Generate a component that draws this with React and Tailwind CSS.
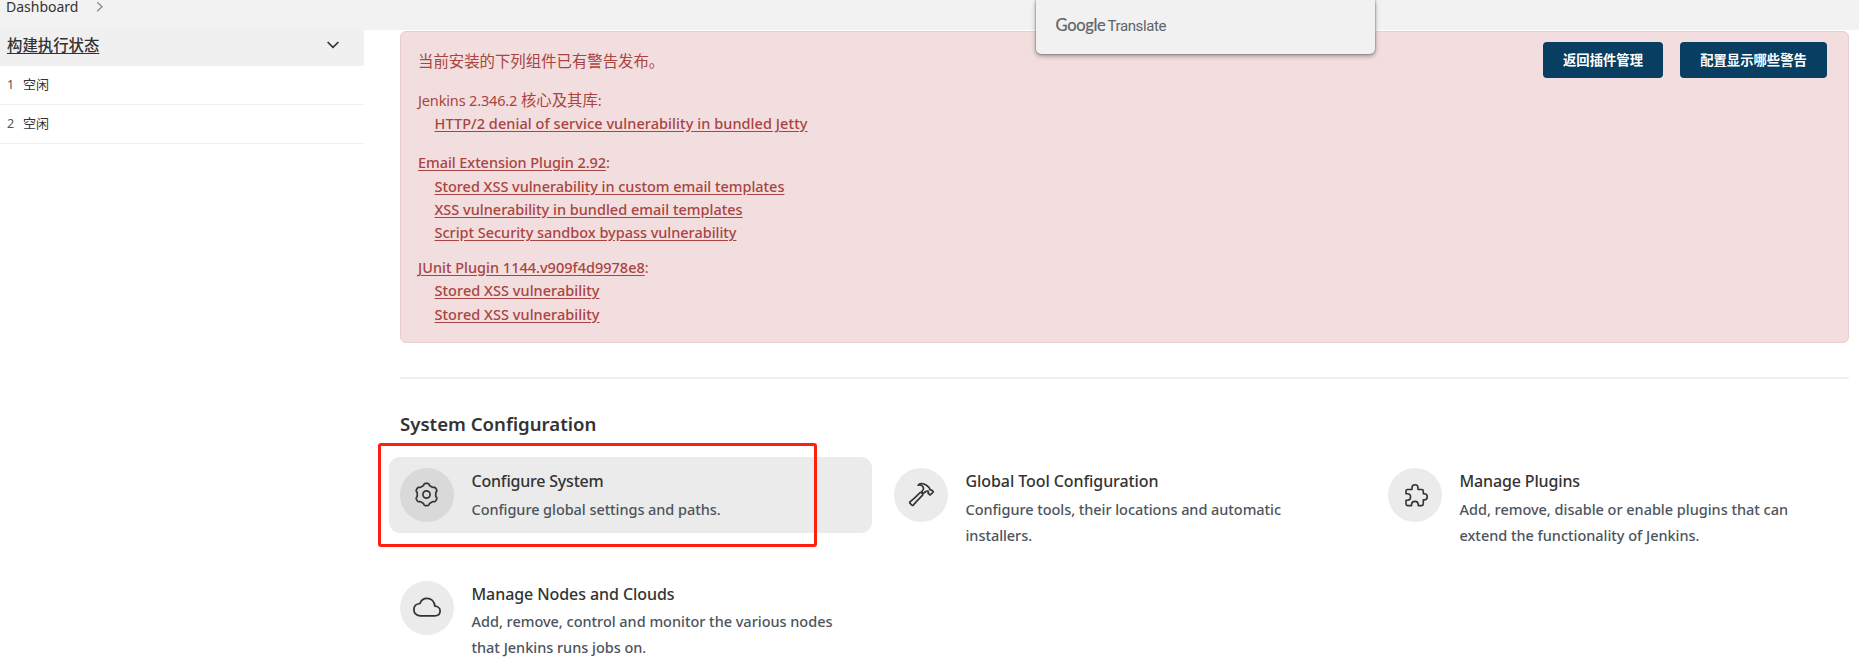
import { IoHammerOutline, IoCloudOutline } from "react-icons/io5";

// Outline of a soft six-toothed cog around the origin.
const cogPath =
  Array.from({ length: 120 }, (_, i) => {
    const a = (i / 120) * Math.PI * 2;
    const r = 10.2 + 0.95 * Math.tanh(2.4 * Math.cos(6 * a));
    return (i ? "L" : "M") + (r * Math.sin(a)).toFixed(2) + " " + (-r * Math.cos(a)).toFixed(2);
  }).join("") + "Z";

function CogIcon() {
  return (
    <svg className="mt-px size-[27px]" viewBox="-13.5 -13.5 27 27" fill="none" stroke="#333" strokeWidth="1.7" strokeLinejoin="round">
      <path d={cogPath} />
      <circle r="3.6" />
    </svg>
  );
}

function PuzzleIcon() {
  return (
    <svg className="mt-[2px] ml-[4px] size-[23px]" viewBox="0 0 23 23" fill="none" stroke="#333" strokeWidth="1.6" strokeLinejoin="round">
      <path d="M1 7Q1 5.5 2.5 5.5H7V3.8a3 3 0 0 1 6 0V5.5H16.8Q18.3 5.5 18.3 7V9.8h.9a3.05 3.05 0 0 1 0 6.1h-.9V20Q18.3 21.6 16.8 21.6H13.2v-.9a3.3 3.3 0 0 0-6.6 0v.9H2.5Q1 21.6 1 20.1V16.2h1.4a3.2 3.2 0 0 0 0-6.4H1Z" />
    </svg>
  );
}

function HammerIcon() {
  return <IoHammerOutline className="mt-px ml-[2px] size-[27px] text-[#333]" />;
}

function CloudIcon() {
  return <IoCloudOutline className="size-[28px] text-[#333]" />;
}

const warnings = [
  {
    title: "Jenkins 2.346.2 ",
    cjk: "核心及其库",
    link: false,
    tracking: "tracking-[-0.15px]",
    gap: "mt-4",
    items: [["HTTP/2 denial of service vulnerability in bundled Jetty", "tracking-[0.064px]"]],
    leading: "leading-[23px]",
  },
  {
    title: "Email Extension Plugin 2.92",
    link: true,
    tracking: "tracking-[-0.065px]",
    gap: "mt-4",
    items: [
      ["Stored XSS vulnerability in custom email templates", "tracking-[-0.03px]"],
      ["XSS vulnerability in bundled email templates", "tracking-normal"],
      ["Script Security sandbox bypass vulnerability", "tracking-[-0.03px]"],
    ],
    leading: "leading-[23.4px] first-of-type:pt-[0.6px]",
  },
  {
    title: "JUnit Plugin 1144.v909f4d9978e8",
    link: true,
    tracking: "tracking-normal",
    gap: "mt-[11px]",
    items: [
      ["Stored XSS vulnerability", "tracking-[0.04px]"],
      ["Stored XSS vulnerability", "tracking-[0.04px]"],
    ],
    leading: "leading-[23.4px] first-of-type:pt-[0.6px]",
  },
];

const cards = [
  {
    icon: CogIcon,
    title: "Configure System",
    titleTracking: "tracking-[-0.2px]",
    lines: ["Configure global settings and paths."],
    tracking: "tracking-[-0.065px]",
    active: true,
  },
  {
    icon: HammerIcon,
    title: "Global Tool Configuration",
    titleTracking: "tracking-[-0.08px]",
    lines: ["Configure tools, their locations and automatic", "installers."],
    tracking: "tracking-[-0.055px]",
  },
  {
    icon: PuzzleIcon,
    title: "Manage Plugins",
    titleTracking: "tracking-[-0.14px]",
    lines: ["Add, remove, disable or enable plugins that can", "extend the functionality of Jenkins."],
    tracking: "tracking-[-0.025px]",
  },
  {
    icon: CloudIcon,
    title: "Manage Nodes and Clouds",
    titleTracking: "tracking-[-0.08px]",
    lines: ["Add, remove, control and monitor the various nodes", "that Jenkins runs jobs on."],
    tracking: "tracking-[-0.025px]",
  },
];

function Breadcrumbs() {
  return (
    <header className="flex h-[30px] shrink-0 items-start bg-[#f2f2f2] pl-[6px]">
      <span className="-mt-px text-[14px] leading-4 text-[#333]">Dashboard</span>
      <svg className="mt-px ml-[18px] h-3 w-2" viewBox="0 0 8 12" fill="none" stroke="#8a8a8a" strokeWidth="1.3">
        <path d="M1.2 1.2 6 5.7 1.2 10.2" />
      </svg>
    </header>
  );
}

function Sidebar() {
  return (
    <aside className="w-[364px] shrink-0">
      <div className="flex h-9 items-center justify-between bg-[#f0f0f0] pr-[25px] pl-[7px]">
        <a className="-mt-1 text-[15.4px] leading-6 font-medium text-[#333] underline decoration-1 underline-offset-[2px]">
          构建执行状态
        </a>
        <svg className="-mt-[7px] h-[8px] w-3" viewBox="0 0 12 8" fill="none" stroke="#333" strokeWidth="1.7">
          <path d="M.6 1 6 6.4 11.4 1" />
        </svg>
      </div>
      {["1", "2"].map((n) => (
        <div key={n} className="flex h-[39px] items-center border-b border-[#f0f0f0] pl-[7px] text-[13px] text-[#333]">
          <span className="w-4 text-[12.5px] text-[#555]">{n}</span>
          <span>空闲</span>
        </div>
      ))}
    </aside>
  );
}

function Alert() {
  return (
    <section className="flex h-[312px] items-start justify-between rounded-[6px] border border-[#ebccd1] bg-[#f2dede] pt-[18px] pr-[21px] pl-[17px] text-[14.5px] text-[#a94442]">
      <div>
        <p className="text-[15.4px] leading-[23px]">当前安装的下列组件已有警告发布。</p>
        {warnings.map((w) => (
          <dl key={w.title} className={w.gap}>
            <dt className={"h-[23px] leading-[23px] " + w.tracking}>
              <span className={w.link ? "font-medium underline underline-offset-[1.5px]" : ""}>{w.title}</span>
              {w.cjk && <span className="text-[15.4px] tracking-normal">{w.cjk}</span>}:
            </dt>
            {w.items.map(([text, tracking], i) => (
              <dd key={i} className={"pl-[16.5px] font-medium " + w.leading}>
                <a className={"underline underline-offset-[1.5px] " + tracking}>{text}</a>
              </dd>
            ))}
          </dl>
        ))}
      </div>
      <div className="-mt-2 flex gap-[17px]">
        <button className="h-9 w-[120px] rounded bg-[#073e61] pt-0.5 text-[13.33px] font-bold text-white">返回插件管理</button>
        <button className="h-9 w-[147px] rounded bg-[#073e61] pt-0.5 text-[13.33px] font-bold text-white">
          配置显示哪些警告
        </button>
      </div>
    </section>
  );
}

function Card({ icon: Icon, title, titleTracking, lines, tracking, active }) {
  return (
    <a className={"flex min-h-[76px] items-start gap-[17.5px] rounded-[11px] pl-[11px] " + (active ? "bg-[#ebebeb]" : "")}>
      <span
        className={
          "mt-[11px] flex size-[54px] shrink-0 items-center justify-center rounded-full pr-px pb-[1.5px] " +
          (active ? "bg-[#d9d9d9]" : "bg-[#ebebeb]")
        }
      >
        <Icon />
      </span>
      <span className="flex flex-col pt-3 whitespace-nowrap">
        <span className={"text-[16px] leading-6 font-medium text-[#333] " + titleTracking}>{title}</span>
        <span className={"mt-[2.9px] flex flex-col text-[14.5px] leading-[26px] font-medium text-[#4d545d] " + tracking}>
          {lines.map((l) => (
            <span key={l}>{l}</span>
          ))}
        </span>
      </span>
    </a>
  );
}

export default function App() {
  return (
    <div className="relative flex h-[666px] w-full flex-col overflow-hidden bg-white font-['Noto_Sans','Noto_Sans_CJK_SC',sans-serif]">
      <Breadcrumbs />
      <div className="flex">
        <Sidebar />
        <main className="min-w-0 flex-1 pt-px pr-[10px] pl-9">
          <Alert />
          <hr className="mt-[34px] border-t-2 border-[#f0f0f0]" />
          <h2 className="mt-[31px] text-[18.6px] leading-7 font-semibold text-[#333]">System Configuration</h2>
          <div className="relative mt-[19px] -ml-[11px] grid grid-cols-[483px_483px_483px] items-start gap-x-[11px]">
            {cards.map((c, i) => (
              <div key={c.title} className={i < 3 ? "h-[112.5px]" : ""}>
                <Card {...c} />
              </div>
            ))}
            <div className="absolute -top-[14px] -left-[11px] h-[104px] w-[439px] rounded-[3px] border-3 border-[#ff1f10]" />
          </div>
        </main>
      </div>
      <div className="absolute top-0 left-[1036px] h-[54px] w-[339px] rounded-b-[5px] bg-[#f1f1f1] pt-[14px] pl-[19.5px] leading-[22px] text-[#5f6368] shadow-[0_0_2px_rgba(0,0,0,0.55),0_2px_5px_rgba(0,0,0,0.35)]">
        <span className="font-['Lato',sans-serif] text-[16.5px] tracking-[-0.3px] [-webkit-text-stroke:0.2px_#5f6368]">Google</span>
        <span className="ml-[2px] font-['Roboto',sans-serif] text-[15px] tracking-[-0.4px]">Translate</span>
      </div>
    </div>
  );
}
